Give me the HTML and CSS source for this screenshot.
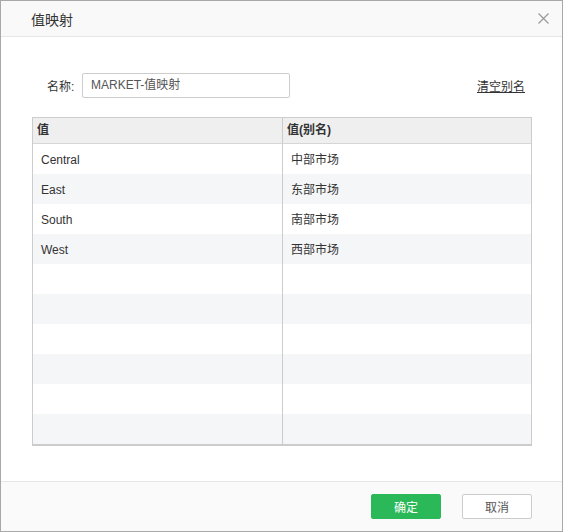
FILE: index.html
```html
<!DOCTYPE html>
<html lang="zh">
<head>
<meta charset="utf-8">
<title>值映射</title>
<link rel="stylesheet" href="styles.css">
</head>
<body>
<div class="dialog">
  <div class="dlg-header">
    <span class="dlg-title">值映射</span>
    <span class="dlg-close"><svg width="11" height="11" viewBox="0 0 11 11"><path d="M0.5 0.5L10.5 10.5M10.5 0.5L0.5 10.5" stroke="#9a9a9a" stroke-width="1.2" fill="none"/></svg></span>
  </div>
  <div class="dlg-body">
    <div class="name-row">
      <label class="name-label">名称:</label>
      <div class="name-input">MARKET-值映射</div>
      <span class="clear-link">清空别名</span>
    </div>
    <div class="grid">
      <div class="grid-head">
        <div class="hcell">值</div>
        <div class="hcell">值(别名)</div>
      </div>
      <div class="grid-rows">
        <div class="row"><div class="cell">Central</div><div class="cell">中部市场</div></div>
        <div class="row alt"><div class="cell">East</div><div class="cell">东部市场</div></div>
        <div class="row"><div class="cell">South</div><div class="cell">南部市场</div></div>
        <div class="row alt"><div class="cell">West</div><div class="cell">西部市场</div></div>
        <div class="row"><div class="cell"></div><div class="cell"></div></div>
        <div class="row alt"><div class="cell"></div><div class="cell"></div></div>
        <div class="row"><div class="cell"></div><div class="cell"></div></div>
        <div class="row alt"><div class="cell"></div><div class="cell"></div></div>
        <div class="row"><div class="cell"></div><div class="cell"></div></div>
        <div class="row alt"><div class="cell"></div><div class="cell"></div></div>
      </div>
    </div>
  </div>
  <div class="dlg-footer">
    <button class="btn btn-ok">确定</button>
    <button class="btn btn-cancel">取消</button>
  </div>
</div>
</body>
</html>
```
FILE: styles.css
```css
html, body {
  margin: 0;
  padding: 0;
  background: #ffffff;
}
body {
  font-family: "Liberation Sans", "Noto Sans CJK SC", sans-serif;
  font-size: 12px;
  color: #333333;
}
.dialog {
  box-sizing: border-box;
  width: 563px;
  height: 532px;
  border: 1px solid #a8a8a8;
  display: flex;
  flex-direction: column;
  background: #ffffff;
}
.dlg-header {
  box-sizing: border-box;
  height: 36px;
  flex: none;
  background: #f9f9f9;
  border-bottom: 1px solid #e6e6e6;
  display: flex;
  align-items: center;
  justify-content: space-between;
  padding: 0 13px 0 30px;
}
.dlg-title {
  font-size: 14px;
  color: #333333;
}
.dlg-close {
  display: flex;
  width: 11px;
  height: 11px;
}
.dlg-body {
  flex: 1;
  padding: 36px 30px 0 31px;
  display: flex;
  flex-direction: column;
}
.name-row {
  display: flex;
  align-items: center;
  height: 25px;
  padding-left: 15px;
}
.name-label {
  font-size: 12px;
  color: #333333;
  width: 28px;
}
.name-input {
  box-sizing: border-box;
  margin-left: 7px;
  width: 208px;
  height: 25px;
  border: 1px solid #cccccc;
  border-radius: 2px;
  padding-left: 8px;
  line-height: 23px;
  color: #555555;
  font-size: 12px;
}
.clear-link {
  margin-left: auto;
  text-decoration: underline;
  color: #333333;
  font-size: 12px;
  margin-right: 7px;
}
.grid {
  margin-top: 19px;
  width: 500px;
  box-sizing: border-box;
  border: 1px solid #cccccc;
  border-bottom: 2px solid #cccccc;
}
.grid-head {
  display: grid;
  grid-template-columns: 250px 1fr;
  height: 26px;
  box-sizing: border-box;
  background: #efefef;
  border-bottom: 1px solid #d6d6d6;
}
.hcell {
  font-weight: bold;
  padding-left: 4px;
  line-height: 25px;
  color: #333333;
}
.hcell:first-child {
  border-right: 1px solid #cccccc;
}
.row {
  display: grid;
  grid-template-columns: 250px 1fr;
  height: 30px;
  background: #ffffff;
}
.row.alt {
  background: #f5f6f8;
}
.cell {
  padding-left: 8px;
  padding-top: 1px;
  line-height: 30px;
  height: 29px;
  color: #333333;
}
.cell:first-child {
  border-right: 1px solid #cccccc;
}
.dlg-footer {
  flex: none;
  box-sizing: border-box;
  height: 50px;
  background: #fafafa;
  border-top: 1px solid #e6e6e6;
  display: flex;
  align-items: center;
  justify-content: flex-end;
  padding-right: 30px;
  gap: 21px;
}
.btn {
  box-sizing: border-box;
  width: 70px;
  height: 25px;
  border-radius: 2px;
  font-family: "Liberation Sans", "Noto Sans CJK SC", sans-serif;
  font-size: 12px;
  padding: 0;
  cursor: pointer;
}
.btn-ok {
  background: #2bb858;
  border: 1px solid #2bb858;
  color: #ffffff;
}
.btn-cancel {
  background: #ffffff;
  border: 1px solid #cccccc;
  color: #555555;
}
```
